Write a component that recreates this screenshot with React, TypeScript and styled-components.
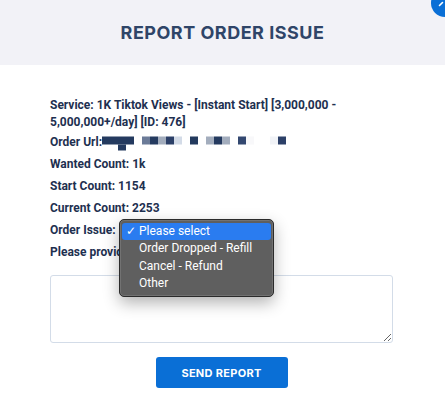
import React from 'react';
import styled, { createGlobalStyle } from 'styled-components';

const GlobalStyle = createGlobalStyle`
   html, body {
      margin: 0;
      padding: 0;
      background: #ffffff;
      overflow: hidden;
   }

   * {
      box-sizing: border-box;
   }
`;

const Wrapper = styled.div`
   position: relative;
   width: 445px;
   min-height: 414px;
   background: #ffffff;
   overflow: hidden;
`;

const Header = styled.header`
   height: 65px;
   background: #f2f2f7;
   display: flex;
   align-items: center;
   justify-content: center;
`;

const Title = styled.h2`
   margin: 0;
   font-family: Inter, 'Noto Sans', sans-serif;
   font-size: 18px;
   font-weight: 700;
   color: #2f4568;
   letter-spacing: 0.5px;
`;

const CornerBadge = styled.button`
   position: absolute;
   top: -11px;
   right: -14px;
   width: 28px;
   height: 28px;
   padding: 0;
   border: none;
   border-radius: 50%;
   background: #0a6fd6;
`;

const BadgeMark = styled.svg`
   position: absolute;
   left: 7px;
   top: 12px;
`;

const Body = styled.section`
   padding: 32px 53px 0 50px;
   font-family: Roboto, 'Liberation Sans', sans-serif;
   font-size: 12px;
   font-weight: 700;
   color: #1e3050;
`;

const Line = styled.p<{ $gap?: number }>`
   position: relative;
   margin: 0 0 ${(p) => p.$gap ?? 5}px;
   line-height: 17px;
`;

const Redacted = styled.svg`
   display: inline-block;
   vertical-align: top;
`;

const Menu = styled.ul`
   position: absolute;
   left: 69px;
   top: -3px;
   width: 155px;
   margin: 0;
   padding: 3px 2px 4px;
   list-style: none;
   background: #5f5f5f;
   border: 1px solid #2b2b2b;
   border-radius: 5px;
   box-shadow: inset 0 0 0 1px rgba(255, 255, 255, 0.12), 0 6px 16px rgba(0, 0, 0, 0.3);
   font-family: Roboto, 'Noto Sans', sans-serif;
   font-size: 12px;
   font-weight: 400;
   z-index: 2;
`;

const MenuItem = styled.li<{ $active?: boolean }>`
   display: flex;
   align-items: center;
   height: 17.3px;
   padding-left: 4px;
   border-radius: 3px;
   background: ${(p) => (p.$active ? '#2a7cf0' : 'transparent')};
   color: #ffffff;
`;

const Check = styled.span`
   width: 13px;
   font-family: 'DejaVu Sans', sans-serif;
   font-size: 12px;
`;

const Details = styled.textarea`
   display: block;
   width: 343px;
   height: 68px;
   margin-top: 14px;
   border: 1px solid #d3dce8;
   border-radius: 3px;
   background: #ffffff;
   outline: none;
`;

const Actions = styled.div`
   display: flex;
   justify-content: center;
   padding-top: 14px;
   width: 343px;
`;

const SendButton = styled.button`
   width: 132px;
   height: 31px;
   border: none;
   border-radius: 3px;
   background: #0a6fd6;
   color: #ffffff;
   font-family: Inter, 'Noto Sans', sans-serif;
   font-size: 11px;
   font-weight: 700;
   letter-spacing: 0.3px;
`;

// pixelated url: [column, row, colour]
const cells: [number, number, string][] = [
   [0, 0, '#243a5f'],
   [1, 0, '#243a5f'],
   [2, 0, '#243a5f'],
   [3, 0, '#243a5f'],
   [2, 1, '#243a5f'],
   [5, 0, '#6b7b98'],
   [6, 0, '#253b60'],
   [7, 0, '#a3adbd'],
   [8, 0, '#2c4068'],
   [9, 0, '#d3dbe7'],
   [11, 0, '#233a5e'],
   [13, 0, '#a3adbd'],
   [14, 0, '#243a5f'],
   [15, 0, '#a3adbd'],
   [17, 0, '#334870'],
   [18, 0, '#f8f8fa'],
   [21, 0, '#f1f3f7'],
   [22, 0, '#2c4068'],
];

const UrlPixels: React.FC = () => (
   <Redacted width="184" height="17" viewBox="0 0 184 17">
      {cells.map(([c, r, fill], i) => (
         <rect key={i} x={c * 8} y={r === 0 ? 2.5 : 10.5} width="8" height={r === 0 ? 8 : 6} fill={fill} />
      ))}
   </Redacted>
);

const options = ['Please select', 'Order Dropped - Refill', 'Cancel - Refund', 'Other'];

const App: React.FC = () => {
   return (
      <Wrapper>
         <GlobalStyle />
         <Header>
            <Title>REPORT ORDER ISSUE</Title>
         </Header>
         <CornerBadge aria-label="close">
            <BadgeMark width="6" height="6" viewBox="0 0 6 6">
               <path d="M1.5 4.5L4.5 1.5" stroke="#ffffff" strokeWidth="1.6" strokeLinecap="round" />
            </BadgeMark>
         </CornerBadge>
         <Body>
            <Line $gap={3}>
               Service: 1K Tiktok Views - [Instant Start] [3,000,000 - 5,000,000+/day] [ID: 476]
            </Line>
            <Line>
               Order Url:
               <UrlPixels />
            </Line>
            <Line>Wanted Count: 1k</Line>
            <Line>Start Count: 1154</Line>
            <Line>Current Count: 2253</Line>
            <Line>
               Order Issue:
               <Menu>
                  {options.map((o, i) => (
                     <MenuItem key={o} $active={i === 0}>
                        <Check>{i === 0 ? '✓' : ''}</Check>
                        {o}
                     </MenuItem>
                  ))}
               </Menu>
            </Line>
            <Line>Please provide details about your issue:</Line>
            <Details />
            <Actions>
               <SendButton>SEND REPORT</SendButton>
            </Actions>
         </Body>
      </Wrapper>
   );
};

export default App;
